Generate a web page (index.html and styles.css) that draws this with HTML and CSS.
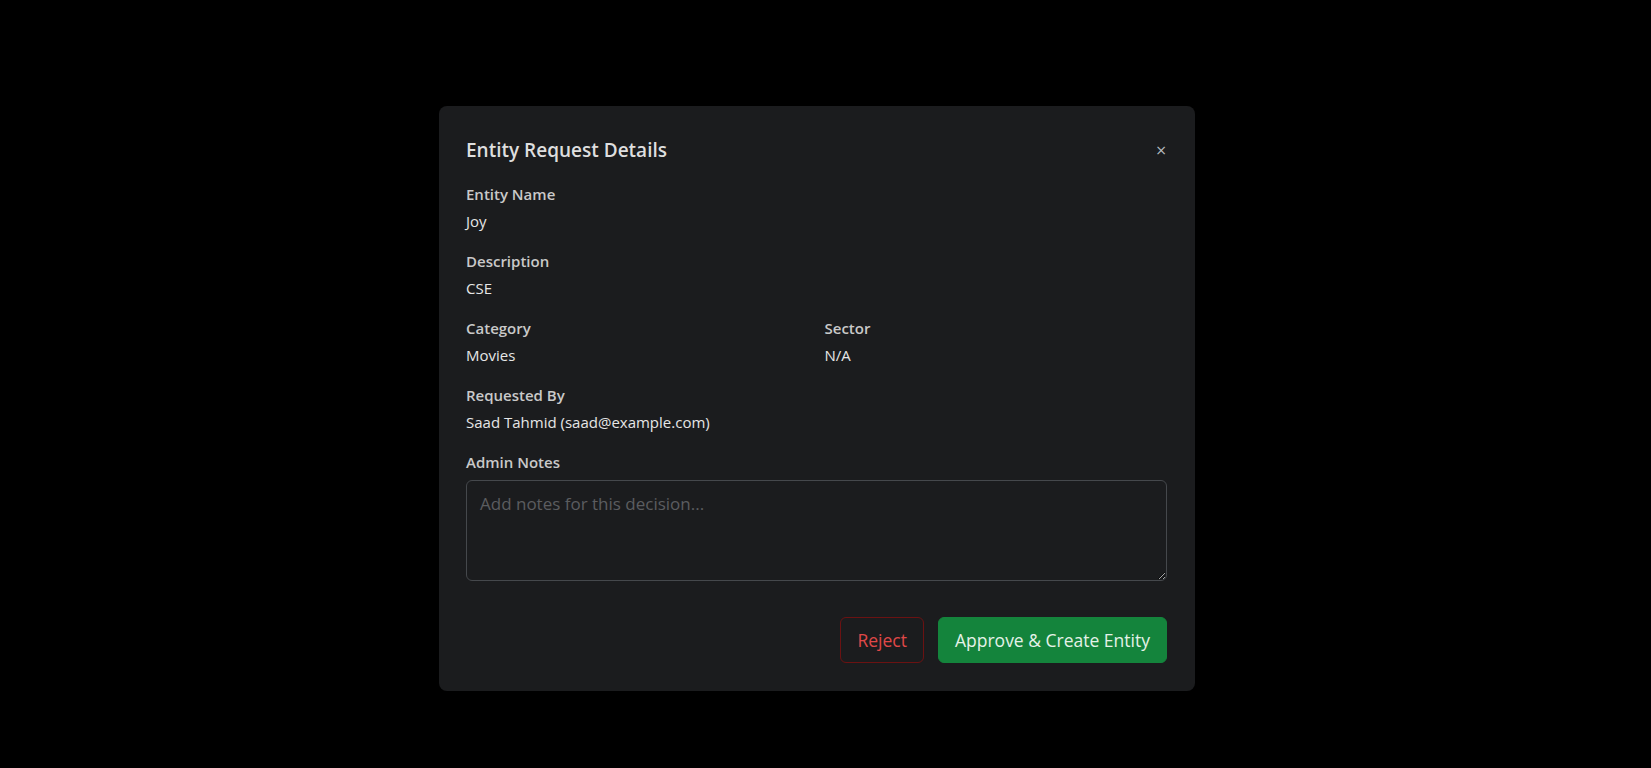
FILE: index.html
```html
<!DOCTYPE html>
<html lang="en">
<head>
<meta charset="utf-8">
<title>Entity Request Details</title>
<link rel="stylesheet" href="styles.css">
</head>
<body>
<div class="backdrop">
  <div class="modal">
    <div class="modal-header">
      <h2 class="modal-title">Entity Request Details</h2>
      <button class="close" type="button" aria-label="Close">&#215;</button>
    </div>
    <div class="modal-body">
      <div class="field">
        <div class="label">Entity Name</div>
        <div class="value">Joy</div>
      </div>
      <div class="field">
        <div class="label">Description</div>
        <div class="value">CSE</div>
      </div>
      <div class="field-row">
        <div class="field">
          <div class="label">Category</div>
          <div class="value">Movies</div>
        </div>
        <div class="field">
          <div class="label">Sector</div>
          <div class="value">N/A</div>
        </div>
      </div>
      <div class="field">
        <div class="label">Requested By</div>
        <div class="value">Saad Tahmid (saad@example.com)</div>
      </div>
      <div class="field notes">
        <label class="label" for="notes">Admin Notes</label>
        <textarea id="notes" class="textarea" placeholder="Add notes for this decision..."></textarea>
      </div>
    </div>
    <div class="modal-footer">
      <button class="btn btn-reject" type="button">Reject</button>
      <button class="btn btn-approve" type="button">Approve &amp; Create Entity</button>
    </div>
  </div>
</div>
</body>
</html>
```
FILE: styles.css
```css
html, body {
  margin: 0;
  padding: 0;
  background: #000;
  height: 100%;
}
body {
  font-family: "Open Sans", "Noto Sans", "Liberation Sans", sans-serif;
  color: #e2e2e2;
  overflow: hidden;
}
.backdrop {
  display: flex;
  justify-content: center;
  align-items: flex-start;
  padding-right: 17px;
  padding-top: 106px;
  box-sizing: border-box;
  height: 768px;
}
.modal {
  width: 756px;
  box-sizing: border-box;
  background: #1b1c1e;
  border-radius: 8px;
  padding: 26px 28px 28px 27px;
}
.modal-header {
  display: flex;
  justify-content: space-between;
  align-items: center;
  height: 36px;
  margin-bottom: 14px;
}
.modal-title {
  margin: 0;
  font-size: 19px;
  font-weight: 600;
  color: #dedede;
  line-height: 24px;
}
.close {
  background: none;
  border: 0;
  padding: 0;
  color: #b9bcc0;
  font-size: 14px;
  line-height: 1;
  font-family: "DejaVu Sans", sans-serif;
  cursor: pointer;
}
.field {
  margin-bottom: 16px;
}
.label {
  display: block;
  font-size: 15px;
  font-weight: 600;
  color: #c9c9c9;
  line-height: 24px;
  margin-bottom: 3px;
}
.value {
  font-size: 15px;
  line-height: 24px;
  color: #e6e6e6;
}
.field-row {
  display: grid;
  grid-template-columns: 1fr 1fr;
  column-gap: 16px;
}
.notes .label {
  margin-bottom: 6px;
}
.textarea {
  display: block;
  width: 100%;
  box-sizing: border-box;
  height: 101px;
  background: #1b1c1e;
  border: 1px solid #45484c;
  border-radius: 6px;
  padding: 11px 13px 10px;
  font-family: inherit;
  font-size: 17px;
  color: #e6e6e6;
  resize: vertical;
  outline: none;
}
.textarea::placeholder {
  color: #5b5d60;
}
.modal-footer {
  display: flex;
  justify-content: flex-end;
  gap: 14px;
  margin-top: 36px;
}
.btn {
  height: 46px;
  box-sizing: border-box;
  font-family: inherit;
  font-size: 17.5px;
  line-height: 28px;
  padding: 8px 16px;
  border-radius: 6px;
  cursor: pointer;
}
.btn-reject {
  background: transparent;
  border: 1px solid #6b1212;
  color: #e04848;
}
.btn-approve {
  background: #14843c;
  border: 1px solid #14843c;
  color: #e4f2e8;
}
```
